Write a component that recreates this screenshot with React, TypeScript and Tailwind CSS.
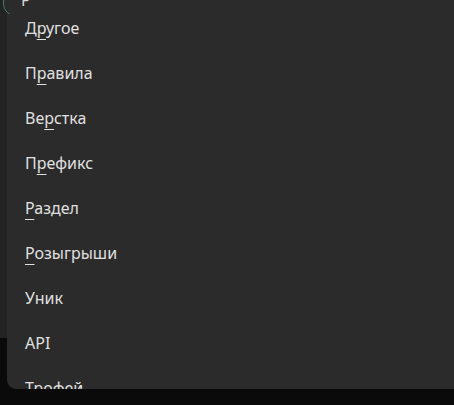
import React from "react";

type Item = { label: string; key?: number };

const items: Item[] = [
  { label: "Другое", key: 1 },
  { label: "Правила", key: 1 },
  { label: "Верстка", key: 2 },
  { label: "Префикс", key: 1 },
  { label: "Раздел", key: 0 },
  { label: "Розыгрыши", key: 0 },
  { label: "Уник" },
  { label: "API" },
  { label: "Трофей" },
];

function Label({ item }: { item: Item }) {
  if (item.key === undefined) return <span>{item.label}</span>;
  const i = item.key;
  return (
    <span>
      {item.label.slice(0, i)}
      <span className="underline decoration-1 underline-offset-[5px]">{item.label[i]}</span>
      {item.label.slice(i + 1)}
    </span>
  );
}

export default function App() {
  return (
    <div
      className="relative w-[454px] h-[405px] overflow-hidden bg-[#0a0a0a]"
      style={{ fontFamily: '"Noto Sans", "Open Sans", sans-serif' }}
    >
      <div className="h-[362px] bg-[#232323] pl-[3px] -mr-[30px]">
        <div className="-mt-[24px] h-[40px] rounded-[12px] border border-[#467a68] bg-[#2b2b2b] flex items-end pl-[17px] pb-[7px]">
          <span className="text-[16px] leading-none text-[#d8d8d8]">Р</span>
        </div>
      </div>
      <div className="flex justify-start pl-[128px] pt-[36px]">
        <span className="w-[5px] h-[4px] rounded-full bg-[#3a3a3a]" />
      </div>

      {/* dropdown list */}
      <div className="absolute left-[7px] right-0 top-[14px] bottom-[16px] bg-[#2b2b2b] rounded-bl-[9px] overflow-hidden">
        <ul className="-mt-[9px]">
          {items.map((it) => (
            <li
              key={it.label}
              className="h-[45px] flex items-center pl-[18px] text-[16px] text-[#e0e0e0]"
            >
              <Label item={it} />
            </li>
          ))}
        </ul>
      </div>
    </div>
  );
}
